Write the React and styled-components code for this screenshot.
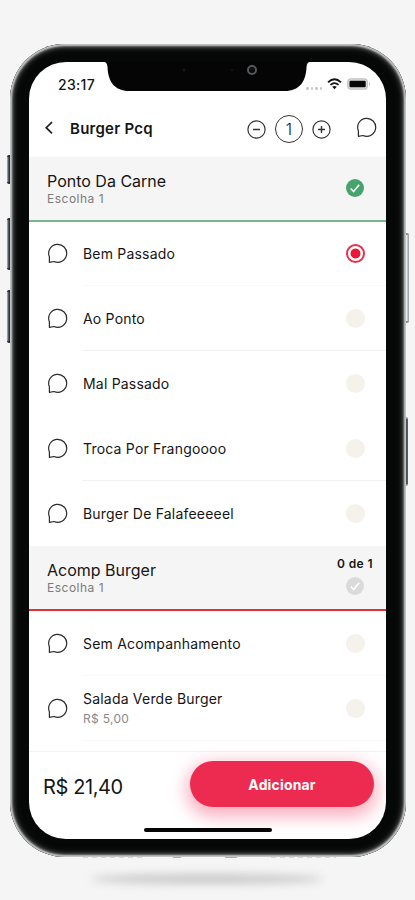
import React, { useState } from 'react';
import styled, { createGlobalStyle, css } from 'styled-components';

const ADD_TEXT = 'Adicionar';
const TOTAL = 'R$ 21,40';

const SECTIONS = [
  {
    title: 'Ponto Da Carne',
    hint: 'Escolha 1',
    done: true,
    items: [
      { name: 'Bem Passado', line: '#f8f8f8' },
      { name: 'Ao Ponto', line: '#f1f1f1' },
      { name: 'Mal Passado', line: 'transparent' },
      { name: 'Troca Por Frangoooo', line: '#f1f1f1' },
      { name: 'Burger De Falafeeeeel', line: 'transparent' },
    ],
  },
  {
    title: 'Acomp Burger',
    hint: 'Escolha 1',
    count: '0 de 1',
    done: false,
    items: [
      { name: 'Sem Acompanhamento', line: '#f8f8f8' },
      { name: 'Salada Verde Burger', price: 'R$ 5,00', line: '#f7f7f7' },
    ],
  },
];

const GlobalStyle = createGlobalStyle`
  * {
    box-sizing: border-box;
  }
  body {
    margin: 0;
    background: #f5f5f5;
    font-family: Inter, 'Liberation Sans', sans-serif;
    color: #151515;
  }
  button {
    font: inherit;
    color: inherit;
    border: 0;
    padding: 0;
    background: none;
  }
`;

const Page = styled.div`
  position: relative;
  height: 900px;
  padding: 44px 9px 0 10px;
  overflow: hidden;
`;

const Phone = styled.div`
  position: relative;
  height: 813px;
  padding: 18px 20px 18px 19px;
  border-radius: 55px;
  background: #060707;
  box-shadow:
    inset 0 0 2px 2px #c8c9c9,
    inset 0 0 4px 3px #5a5b5b,
    inset 0 0 6px 5px #1b1d1d;
`;

const SideKey = styled.div`
  position: absolute;
  top: ${(props) => props.$top}px;
  height: ${(props) => props.$height}px;
  width: 6px;
  border-radius: 2px;
  ${(props) =>
    props.$right
      ? css`
          left: ${props.$dark ? 402 : 403}px;
          background: ${props.$dark
            ? 'linear-gradient(90deg, #25292b, #596069)'
            : 'linear-gradient(90deg, #84898c, #eef1f2 55%, #8b9297)'};
        `
      : css`
          left: 7px;
          background: linear-gradient(90deg, #b9bfc5, #26303d 35%, #3c4a5c 70%, #0c0d0e);
        `}
  border-top: 2px solid ${(props) => (props.$right ? '#8b8f93' : '#242a33')};
  border-bottom: 2px solid ${(props) => (props.$right ? '#8b8f93' : '#242a33')};
`;

const Screen = styled.div`
  position: relative;
  height: 777px;
  display: flex;
  flex-direction: column;
  overflow: hidden;
  border-radius: 37px;
  background: #fff;
`;

const NotchShape = styled.svg`
  position: absolute;
  top: 0;
  left: 75px;
`;

const StatusBar = styled.div`
  height: 45px;
  flex: none;
  display: flex;
  justify-content: space-between;
  padding: 14px 15px 0 29px;
`;

const Time = styled.span`
  font-size: 14px;
  line-height: 18px;
  font-weight: 500;
  letter-spacing: 0.3px;
`;

const StatusIcons = styled.div`
  display: flex;
  align-items: center;
  gap: 5px;
  height: 16px;
`;

const Dots = styled.div`
  display: flex;
  gap: 2px;
  padding-top: 9px;

  i {
    width: 2.5px;
    height: 2.5px;
    border-radius: 50%;
    background: #c9c9c9;
  }
`;

const Header = styled.header`
  height: 50px;
  flex: none;
  display: flex;
  align-items: center;
  padding: 0 9px 5px 16px;
  border-bottom: 1px solid #fafafa;
`;

const Title = styled.h1`
  flex: 1;
  margin: -1px 0 0 17px;
  font-size: 15px;
  font-weight: 600;
  letter-spacing: 0.25px;
`;

const Stepper = styled.div`
  display: flex;
  align-items: center;
  gap: 9px;
  margin-right: 25px;
`;

const IconButton = styled.button`
  display: flex;
  margin-top: ${(props) => props.$lift || 0}px;
`;

const Quantity = styled.span`
  width: 28px;
  height: 28px;
  display: flex;
  align-items: center;
  justify-content: center;
  border: 1.3px solid #333;
  border-radius: 50%;
  font-size: 16px;
  font-weight: 300;
`;

const SectionHead = styled.div`
  height: 65px;
  flex: none;
  display: flex;
  justify-content: space-between;
  padding: 15px 13px 0 18px;
  background: #f5f5f5;
  border-bottom: 2px solid ${(props) => (props.$done ? '#77b68f' : '#df3338')};
`;

const SectionTitle = styled.h2`
  margin: 0;
  font-size: 16px;
  line-height: 18px;
  font-weight: 400;
`;

const Hint = styled.p`
  margin: 0;
  font-size: 12px;
  line-height: 18px;
  color: #7c7c7c;
  letter-spacing: 0.5px;
`;

const SectionState = styled.div`
  display: flex;
  flex-direction: column;
  align-items: flex-end;
  margin-top: ${(props) => (props.$done ? 7 : -5)}px;

  svg {
    margin-right: 9px;
  }
`;

const Count = styled.span`
  font-size: 12px;
  line-height: 16px;
  font-weight: 600;
  letter-spacing: 0.4px;
  margin-bottom: 5px;
`;

const Row = styled.div`
  height: 65px;
  flex: none;
  display: flex;
  align-items: center;
  padding-left: 18px;
`;

const RowBody = styled.div`
  flex: 1;
  height: 65px;
  margin-left: 14px;
  padding: 0 21px 0 1px;
  display: flex;
  align-items: center;
  justify-content: space-between;
  border-bottom: 1px solid ${(props) => props.$line};
`;

const ItemName = styled.div`
  font-size: 14px;
  line-height: 19px;
  letter-spacing: 0.2px;
`;

const Price = styled.div`
  margin-top: 2px;
  font-size: 12px;
  line-height: 18px;
  letter-spacing: 0.3px;
  color: #8a8a8a;
`;

const Radio = styled.button`
  width: 19px;
  height: 19px;
  border-radius: 50%;
  background: #f5f1eb;
  ${(props) =>
    props.$checked &&
    css`
      background: radial-gradient(circle, #e9183a 4.5px, #fff 5.4px);
      border: 2px solid #e8324a;
    `}
`;

const Items = styled.div`
  flex: none;
  height: ${(props) => props.$height}px;
  margin-top: ${(props) => props.$shift}px;
`;

const Footer = styled.footer`
  height: 88px;
  margin-top: auto;
  flex: none;
  display: flex;
  justify-content: space-between;
  padding: 9px 12px 0 14px;
  border-top: 1px solid #f3f3f3;
`;

const Total = styled.span`
  padding-top: 13px;
  font-size: 20px;
  line-height: 26px;
  letter-spacing: -0.4px;
`;

const AddButton = styled.button`
  width: 184px;
  height: 46px;
  border-radius: 23px;
  background: #ed2a50;
  color: #fff;
  font-size: 14px;
  font-weight: 700;
  letter-spacing: 0.15px;
  box-shadow: 0 6px 18px 3px rgba(240, 40, 82, 0.4);
`;

const HomeBar = styled.div`
  position: absolute;
  left: 115px;
  bottom: 7px;
  width: 128px;
  height: 4px;
  border-radius: 2px;
  background: #050505;
`;

const Grille = styled.svg`
  position: absolute;
  left: 78px;
  top: 852px;
`;

const Shadow = styled.div`
  position: absolute;
  left: 91px;
  top: 874px;
  width: 232px;
  height: 10px;
  border-radius: 50%;
  background: #c9c9c9;
  filter: blur(4px);
`;

const Notch = () => (
  <NotchShape width="206" height="30" viewBox="0 0 206 30">
    <path
      d="M0 0 Q3 0 3.5 5 C4 20 11 29 25 29 H181 C195 29 202 20 202.500 5 Q203 0 206 0 Z"
      fill="#050505"
    />
    <circle cx="148" cy="8" r="4" fill="none" stroke="#555a5c" strokeWidth="2" />
    <circle cx="148" cy="7.500" r="2.200" fill="#111" />
    <circle cx="80" cy="8" r="1.500" fill="#17191a" />
    <circle cx="128" cy="8" r="0.800" fill="#242424" />
  </NotchShape>
);

const Bubble = () => (
  <svg width="21" height="21" viewBox="0 0 21 21" fill="none">
    <path
      d="M2.400 19.400 V13.800 A9 9 0 1 1 7 18.500 Z"
      stroke="#2b2b2b"
      strokeWidth="1.200"
      strokeLinejoin="round"
    />
  </svg>
);

const CircleSign = ({ plus }) => (
  <svg width="19" height="19" viewBox="0 0 19 19" fill="none" stroke="#333">
    <circle cx="9.500" cy="9.500" r="8.600" strokeWidth="1.200" />
    <path d={plus ? 'M6 9.500h7M9.500 6v7' : 'M6 9.500h7'} strokeWidth="1.400" />
  </svg>
);

const Check = ({ done }) => (
  <svg width="18" height="18" viewBox="0 0 18 18" fill="none">
    <circle cx="9" cy="9" r="9" fill={done ? '#46a36d' : '#dadada'} />
    <path d="M4.700 9.500 L7.600 12.500 L13.200 5.700" stroke="#fff" strokeWidth="1.500" />
  </svg>
);

const Wifi = () => (
  <svg width="15" height="12" viewBox="0 0 15 12" fill="none" stroke="#111">
    <path d="M1 4.300 Q7.500 -1.800 14 4.300" strokeWidth="1.700" />
    <path d="M3.400 6.900 Q7.500 3.200 11.600 6.900" strokeWidth="1.600" />
    <path d="M5.200 8.800 Q7.500 7 9.800 8.800 L7.500 11.300 Z" fill="#111" stroke="none" />
  </svg>
);

const Battery = () => (
  <svg width="24" height="12" viewBox="0 0 24 12">
    <rect x="0.800" y="0.800" width="19.500" height="10.400" rx="3" fill="#dedede" stroke="#c4c4c4" strokeWidth="1.300" />
    <rect x="2.500" y="2.700" width="16.200" height="6.600" rx="1" fill="#080808" />
    <path d="M22 4 Q24.300 6 22 8 Z" fill="#bcbcbc" />
  </svg>
);

const App = () => {
  const [selected, setSelected] = useState('Bem Passado');

  return (
    <>
      <GlobalStyle />
      <Page>
        <SideKey $top={155} $height={29} />
        <SideKey $top={218} $height={52} />
        <SideKey $top={290} $height={53} />
        <SideKey $right $top={233} $height={90} />
        <SideKey $right $dark $top={417} $height={69} />
        <Grille width="266" height="6" viewBox="0 0 266 6">
          <path d="M5 4.500H66M193 4.500H258" stroke="#777" strokeWidth="1.500" strokeDasharray="5 4" />
          <path d="M95 4.500h8M147 4.500h12" stroke="#666" strokeWidth="2" />
        </Grille>
        <Shadow />
        <Phone>
          <Screen>
            <StatusBar>
              <Time>23:17</Time>
              <StatusIcons>
                <Dots>
                  <i />
                  <i />
                  <i />
                  <i />
                </Dots>
                <Wifi />
                <Battery />
              </StatusIcons>
            </StatusBar>
            <Header>
              <IconButton $lift={-3}>
                <svg width="8" height="14" viewBox="0 0 8 14" fill="none">
                  <path d="M7 1.200 L1.200 6.700 L7 12.300" stroke="#1c1c1c" strokeWidth="1.600" />
                </svg>
              </IconButton>
              <Title>Burger Pcq</Title>
              <Stepper>
                <IconButton>
                  <CircleSign />
                </IconButton>
                <Quantity>1</Quantity>
                <IconButton>
                  <CircleSign plus />
                </IconButton>
              </Stepper>
              <IconButton $lift={-3}>
                <Bubble />
              </IconButton>
            </Header>
            {SECTIONS.map((section) => (
              <React.Fragment key={section.title}>
                <SectionHead $done={section.done}>
                  <div>
                    <SectionTitle>{section.title}</SectionTitle>
                    <Hint>{section.hint}</Hint>
                  </div>
                  <SectionState $done={section.done}>
                    {section.count && <Count>{section.count}</Count>}
                    <Check done={section.done} />
                  </SectionState>
                </SectionHead>
                <Items
                  $height={section.items.length * 65}
                  $shift={section.done ? -1 : 0}
                >
                  {section.items.map((item) => (
                    <Row key={item.name}>
                      <Bubble />
                      <RowBody $line={item.line}>
                        <div>
                          <ItemName>{item.name}</ItemName>
                          {item.price && <Price>{item.price}</Price>}
                        </div>
                        <Radio
                          $checked={item.name === selected}
                          onClick={() => setSelected(item.name)}
                        />
                      </RowBody>
                    </Row>
                  ))}
                </Items>
              </React.Fragment>
            ))}
            <Footer>
              <Total>{TOTAL}</Total>
              <AddButton>{ADD_TEXT}</AddButton>
            </Footer>
            <HomeBar />
            <Notch />
          </Screen>
        </Phone>
      </Page>
    </>
  );
};

export default App;
